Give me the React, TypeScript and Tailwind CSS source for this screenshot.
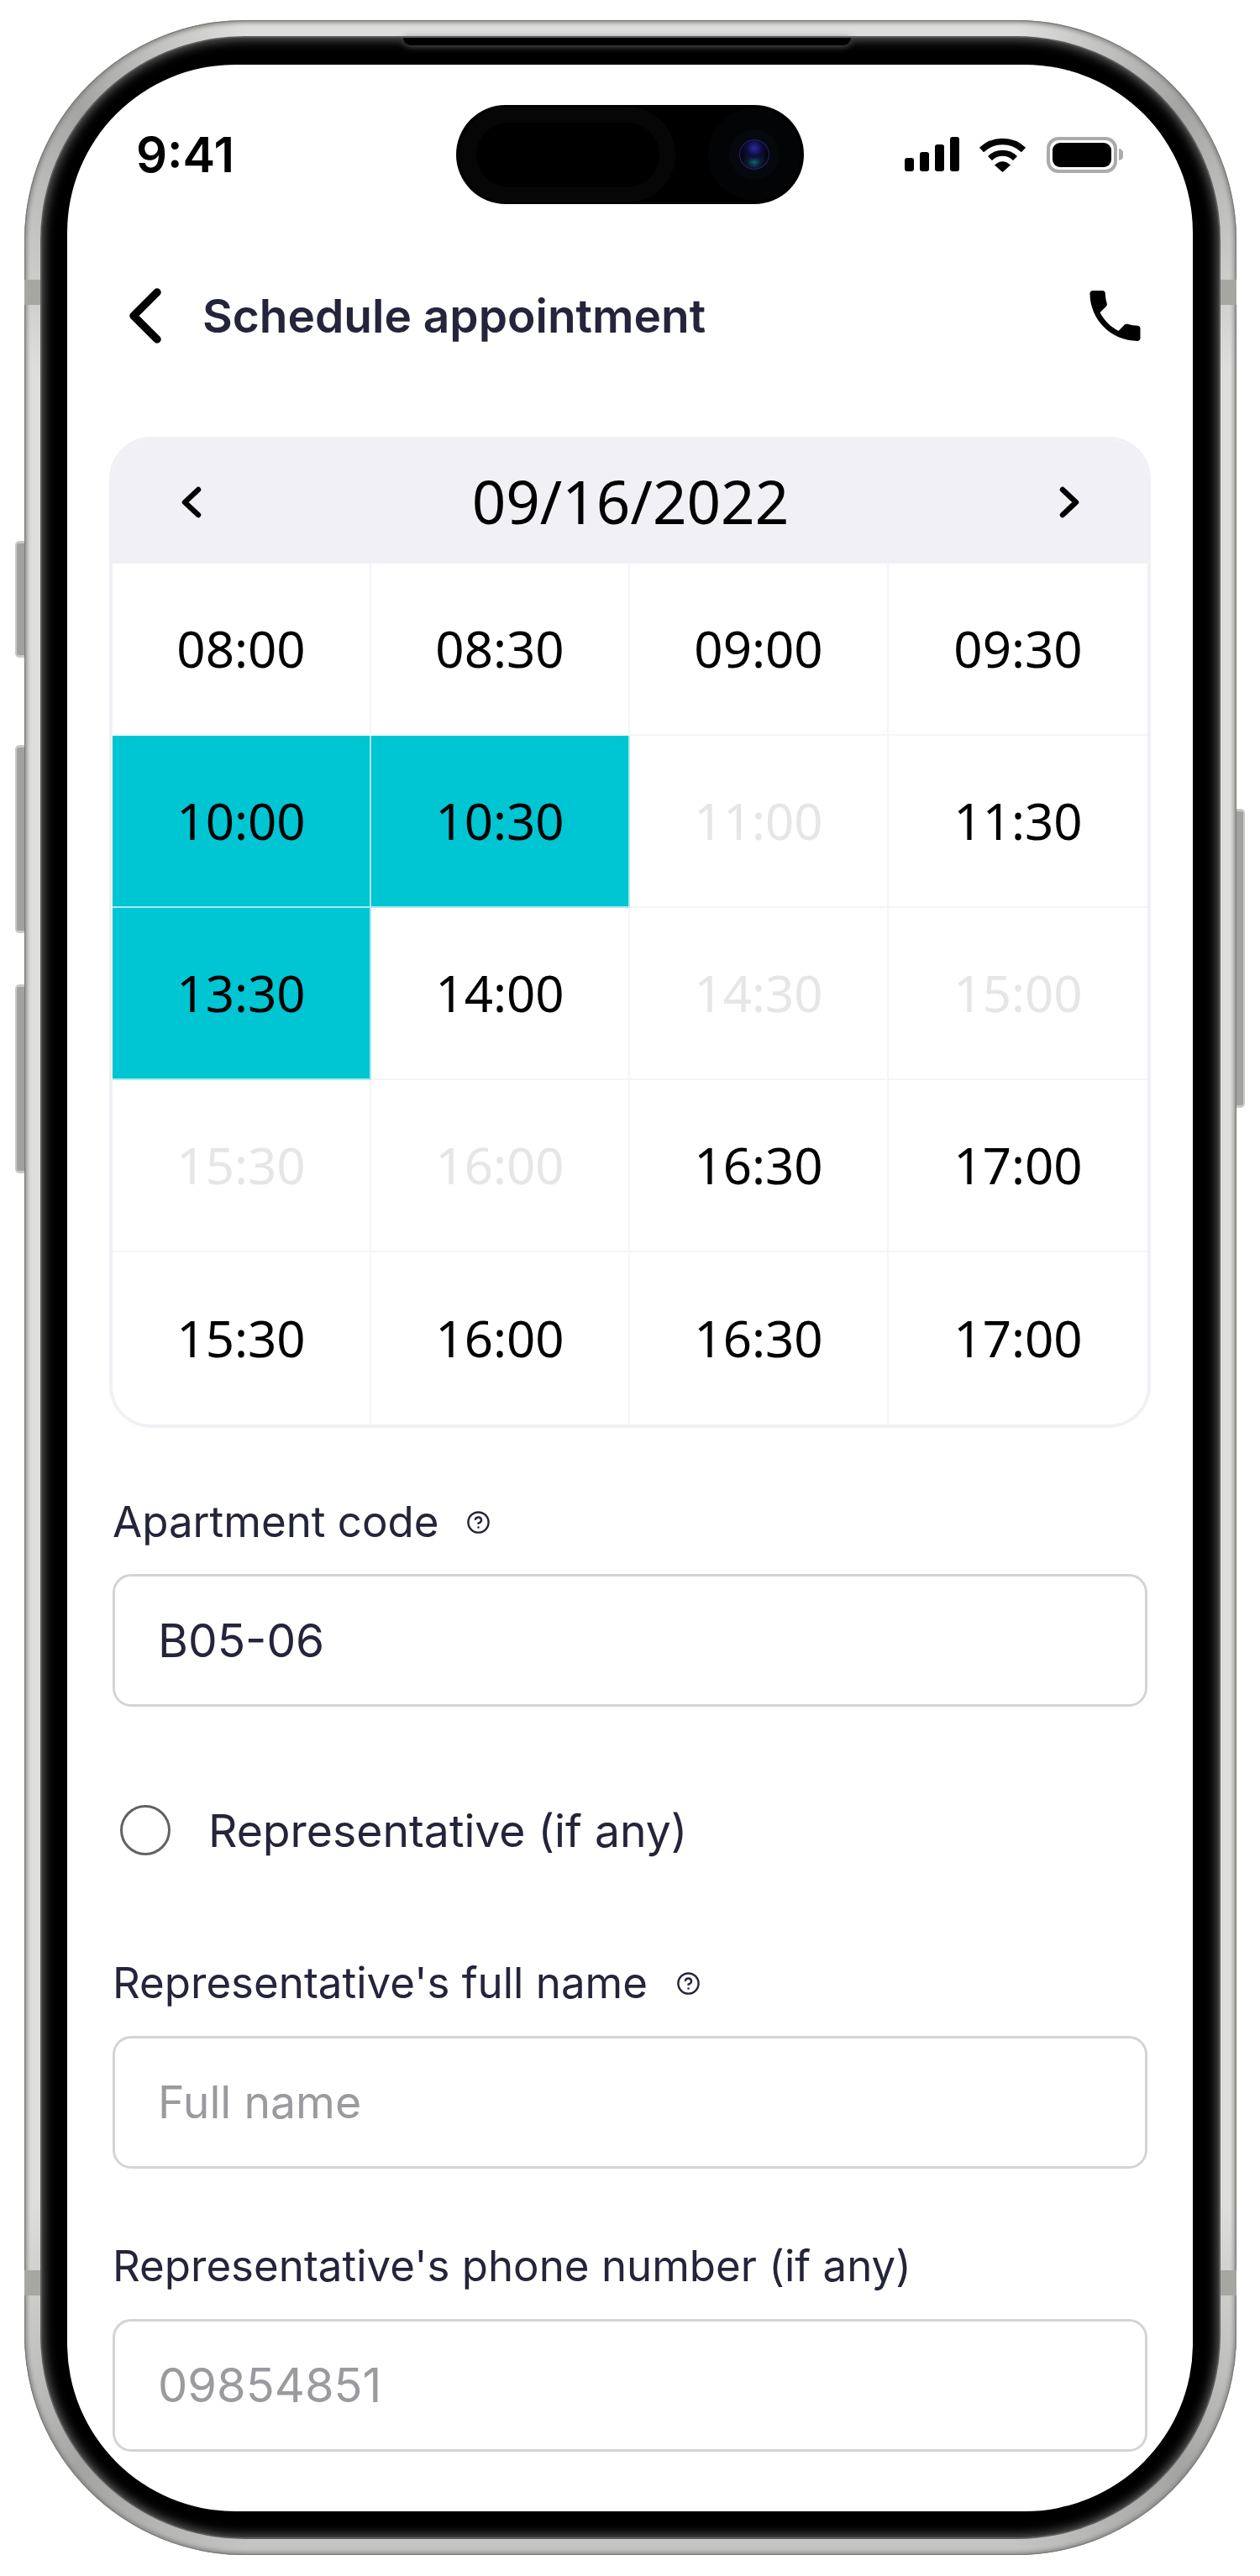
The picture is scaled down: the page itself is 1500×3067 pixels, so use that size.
import { CircleHelp } from "lucide-react";

type Slot = { time: string; state?: "selected" | "disabled" };

const slots: Slot[] = [
  { time: "08:00" },
  { time: "08:30" },
  { time: "09:00" },
  { time: "09:30" },
  { time: "10:00", state: "selected" },
  { time: "10:30", state: "selected" },
  { time: "11:00", state: "disabled" },
  { time: "11:30" },
  { time: "13:30", state: "selected" },
  { time: "14:00" },
  { time: "14:30", state: "disabled" },
  { time: "15:00", state: "disabled" },
  { time: "15:30", state: "disabled" },
  { time: "16:00", state: "disabled" },
  { time: "16:30" },
  { time: "17:00" },
  { time: "15:30" },
  { time: "16:00" },
  { time: "16:30" },
  { time: "17:00" },
];

const StatusIcons = () => (
  <div className="flex items-center justify-end pr-[83px]">
    <div className="flex items-end gap-[7px] h-[42px] pb-px">
      <span className="w-[11px] h-[16px] rounded-[3px] bg-black" />
      <span className="w-[11px] h-[23px] rounded-[3px] bg-black" />
      <span className="w-[11px] h-[32px] rounded-[3px] bg-black" />
      <span className="w-[11px] h-[41px] rounded-[3px] bg-black" />
    </div>
    <svg className="ml-[23px]" width="57" height="42" viewBox="0 0 57 42">
      <path d="M3.5 15.5A36 36 0 0 1 53.5 15.5" fill="none" stroke="#000" strokeWidth="7.5" />
      <path d="M13.5 25.5A21 21 0 0 1 43.5 25.5" fill="none" stroke="#000" strokeWidth="7" />
      <path d="M19 33.5Q28.5 25 38 33.5L28.5 42Z" fill="#000" />
    </svg>
    <div className="ml-[24px] flex items-center">
      <div className="w-[84px] h-[43px] rounded-[14px] border-[4px] border-[#ababab] p-[3px]">
        <div className="w-full h-full rounded-[9px] bg-black" />
      </div>
      <span className="ml-[2px] w-[5px] h-[14px] rounded-r-full bg-[#ababab]" />
    </div>
  </div>
);

const Island = () => (
  <div className="w-[414px] h-[118px] rounded-full bg-black flex items-center relative">
    <div className="ml-[4px] w-[257px] h-[114px] rounded-full bg-[#060606] flex items-center justify-center">
      <div className="w-[218px] h-[77px] rounded-full bg-black" />
    </div>
    <div className="absolute left-[300px] top-[4px] w-[110px] h-[110px] rounded-full bg-[#030405] flex items-center justify-center">
      <div className="w-[60px] h-[60px] rounded-full bg-[#05080c] flex items-center justify-center">
        <div className="w-[34px] h-[34px] rounded-full shadow-[0_0_0_1px_#2a1f66] bg-[#05060f] bg-[radial-gradient(circle_at_50%_28%,#2b2a9c_0,#0c0c3a_32%,transparent_55%),radial-gradient(circle_at_50%_74%,#136675_0,#0a1a30_26%,transparent_50%)]" />
      </div>
    </div>
  </div>
);

const Chevron = ({ flip }: { flip?: boolean }) => (
  <svg width="24" height="38" viewBox="0 0 24 38" className={flip ? "rotate-180" : ""}>
    <polyline
      points="20,4 4,19 20,34"
      fill="none"
      stroke="#000"
      strokeWidth="6.5"
      strokeLinecap="round"
      strokeLinejoin="round"
    />
  </svg>
);

const Field = ({ children }: { children: React.ReactNode }) => (
  <div className="h-[158px] rounded-[22px] border-[3px] border-[#d4d4d6] bg-white pl-[51px] flex items-center font-[Inter,sans-serif]">
    {children}
  </div>
);

const Label = ({ text, help, gap }: { text: string; help?: boolean; gap?: string }) => (
  <div className="h-[60px] flex items-center text-[51px] leading-[60px] text-[#24243a] font-[Inter,sans-serif]">
    {text}
    {help && <CircleHelp size={29} strokeWidth={2} className={gap} />}
  </div>
);

export default function App() {
  return (
    <div className="relative w-[1500px] h-[3067px] bg-white overflow-hidden pt-[24px] pl-[29px]">
      {/* side buttons */}
      <div className="absolute left-[18px] top-[644px] w-[14px] h-[139px] rounded-l-[5px] bg-[#a2a2a0] border-y-[3px] border-l-[2px] border-[#c9c9c7]" />
      <div className="absolute left-[18px] top-[887px] w-[14px] h-[224px] rounded-l-[5px] bg-[#a2a2a0] border-y-[3px] border-l-[2px] border-[#c9c9c7]" />
      <div className="absolute left-[18px] top-[1172px] w-[14px] h-[225px] rounded-l-[5px] bg-[#a2a2a0] border-y-[3px] border-l-[2px] border-[#c9c9c7]" />
      <div className="absolute left-[1469px] top-[963px] w-[13px] h-[356px] rounded-r-[5px] bg-[#a2a2a0] border-y-[3px] border-r-[2px] border-[#c9c9c7]" />

      {/* metal frame */}
      <div className="relative w-[1443px] h-[3018px] rounded-[262px] p-[21px] bg-[conic-gradient(#dedfdc_0deg,#dedfdc_17deg,#a4a4a2_25deg,#dedfdc_33deg,#dedfdc_147deg,#a4a4a2_155deg,#c4c4c2_163deg,#c4c4c2_197deg,#a4a4a2_205deg,#dedfdc_213deg,#dedfdc_327deg,#a4a4a2_335deg,#dedfdc_343deg)] shadow-[inset_0_0_0_1px_#7a7a78,inset_0_0_5px_3px_#868684]">
        {/* antenna bands */}
        <div className="absolute left-0 top-[309px] w-[21px] h-[30px] bg-[#a6a6a2]" />
        <div className="absolute right-0 top-[309px] w-[21px] h-[30px] bg-[#a6a6a2]" />
        <div className="absolute left-0 top-[2679px] w-[21px] h-[30px] bg-[#a6a6a2]" />
        <div className="absolute right-0 top-[2679px] w-[21px] h-[30px] bg-[#a6a6a2]" />

        <div className="relative w-full h-full rounded-[241px] bg-black pl-[30px] pr-[31px] py-[32px] shadow-[0_0_0_2px_#5a5a5a,inset_0_0_14px_1px_#6e6e6e]">
          {/* speaker cut */}
          <div className="absolute left-[430px] top-0 w-[533px] h-[9px] bg-black rounded-b-[10px] shadow-[0_1px_8px_#5c5c5c]" />

          <div className="relative w-[1340px] h-[2913px] rounded-[200px] bg-white overflow-hidden">
            <div className="grid grid-cols-[1fr_414px_1fr] items-center pt-[48px]">
              <div className="pl-[82px] text-[58px] leading-[60px] font-semibold text-black font-[Inter,sans-serif]">
                9:41
              </div>
              <Island />
              <StatusIcons />
            </div>

            <div className="mt-[100px] h-[66px] pl-[74px] pr-[62px] flex items-center">
              <svg width="39" height="66" viewBox="0 0 39 66">
                <polyline
                  points="33,5 5,33 33,61"
                  fill="none"
                  stroke="#000"
                  strokeWidth="9.5"
                  strokeLinecap="round"
                  strokeLinejoin="round"
                />
              </svg>
              <div className="ml-[48px] text-[55px] font-semibold text-[#24243a] font-[Inter,sans-serif]">
                Schedule appointment
              </div>
              <svg className="ml-auto" width="61" height="60" viewBox="3 3 18 18">
                <path
                  fill="#000"
                  d="M6.62 10.79c1.44 2.83 3.76 5.14 6.59 6.59l2.2-2.2c.27-.27.67-.36 1.02-.24 1.12.37 2.33.57 3.57.57.55 0 1 .45 1 1V20c0 .55-.45 1-1 1-9.39 0-17-7.61-17-17 0-.55.45-1 1-1h3.5c.55 0 1 .45 1 1 0 1.25.2 2.45.57 3.57.11.35.03.74-.25 1.02l-2.2 2.2z"
                />
              </svg>
            </div>

            <div className="mt-[111px] mx-[50px] rounded-[50px] border-4 border-[#f1f1f5] overflow-hidden font-['Noto_Sans',sans-serif]">
              <div className="h-[147px] bg-[#f1f1f5] pl-[82px] pr-[81px] flex items-center justify-between">
                <Chevron />
                <div className="text-[71px] text-black">09/16/2022</div>
                <Chevron flip />
              </div>
              <div className="grid grid-cols-4">
                {slots.map((slot, i) => (
                  <div
                    key={i}
                    className={`h-[205px] pb-[2px] flex items-center justify-center text-[60px] border-r-2 border-b-2 last:border-r-0 nth-[4n]:border-r-0 nth-[n+17]:border-b-0
                    ${slot.state === "selected" ? "bg-[#00c5d2] border-[#a8eaef]" : "border-[#f5f5f8]"}
                    ${slot.state === "disabled" ? "text-[#e6e6e6]" : "text-black"}`}
                  >
                    {slot.time}
                  </div>
                ))}
              </div>
            </div>

            <div className="mt-[82px] mx-[54px] text-[#24243a]">
              <Label text="Apartment code" help gap="ml-[33px]" />
              <div className="mt-[32px]">
                <Field>
                  <span className="text-[55px]">B05-06</span>
                </Field>
              </div>

              <div className="mt-[117px] h-[60px] pl-[9px] flex items-center">
                <span className="w-[60px] h-[60px] rounded-full border-[3px] border-[#5f6368]" />
                <span className="ml-[45px] text-[53.5px] pt-[2px] font-[Inter,sans-serif]">Representative (if any)</span>
              </div>

              <div className="mt-[122px]">
                <Label text="Representative's full name" help gap="ml-[34px]" />
              </div>
              <div className="mt-[33px]">
                <Field>
                  <span className="text-[53.5px] text-[#9a9a9f]">Full name</span>
                </Field>
              </div>

              <div className="mt-[86px]">
                <Label text="Representative's phone number (if any)" />
              </div>
              <div className="mt-[33px]">
                <Field>
                  <span className="text-[56px] text-[#9a9a9f]">09854851</span>
                </Field>
              </div>
            </div>
          </div>
        </div>
      </div>
    </div>
  );
}
